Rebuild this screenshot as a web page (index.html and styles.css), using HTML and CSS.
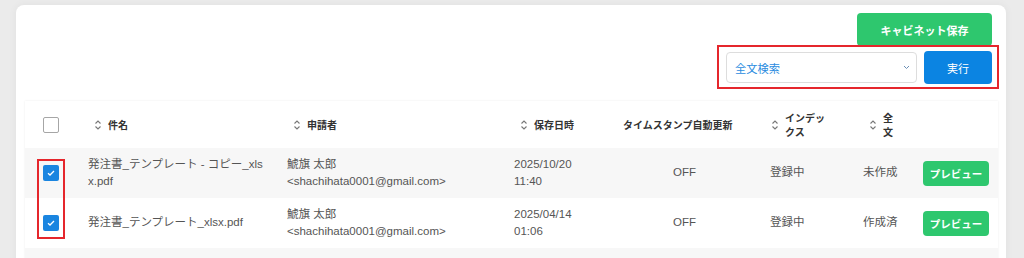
FILE: index.html
```html
<!DOCTYPE html>
<html lang="ja">
<head>
  <meta charset="UTF-8" />
  <meta name="viewport" content="width=device-width, initial-scale=1.0" />
  <title>キャビネット</title>
  <link rel="stylesheet" href="styles.css">
</head>
<body>
  <div class="card">
    <div class="toolbar">
      <button class="btn-save">キャビネット保存</button>
      <div class="search-row mark">
        <div class="select">
          <span>全文検索</span>
          <svg width="7" height="5" viewBox="0 0 7 5"><path d="M1 1 L3.5 3.5 L6 1" fill="none" stroke="#6b8fb5" stroke-width="1"/></svg>
        </div>
        <button class="btn-run">実行</button>
      </div>
    </div>

    <div class="table-wrap">
      <table class="files">
        <colgroup>
          <col style="width: 55px">
          <col style="width: 199px">
          <col style="width: 227px">
          <col style="width: 109px">
          <col style="width: 147px">
          <col style="width: 93px">
          <col style="width: 60px">
          <col style="width: 83px">
        </colgroup>
        <thead>
          <tr>
            <th class="cb-cell"><span class="checkbox"></span></th>
            <th><span class="sort"><svg class="sort-icon" width="8" height="12" viewBox="0 0 8 12"><path d="M1.5 4.5 L4 2 L6.5 4.5 M1.5 7.5 L4 10 L6.5 7.5" fill="none" stroke="#777" stroke-width="1.1"/></svg><span>件名</span></span></th>
            <th><span class="sort"><svg class="sort-icon" width="8" height="12" viewBox="0 0 8 12"><path d="M1.5 4.5 L4 2 L6.5 4.5 M1.5 7.5 L4 10 L6.5 7.5" fill="none" stroke="#777" stroke-width="1.1"/></svg><span>申請者</span></span></th>
            <th><span class="sort"><svg class="sort-icon" width="8" height="12" viewBox="0 0 8 12"><path d="M1.5 4.5 L4 2 L6.5 4.5 M1.5 7.5 L4 10 L6.5 7.5" fill="none" stroke="#777" stroke-width="1.1"/></svg><span>保存日時</span></span></th>
            <th class="plain">タイムスタンプ自動更新</th>
            <th class="tight"><span class="sort"><svg class="sort-icon" width="8" height="12" viewBox="0 0 8 12"><path d="M1.5 4.5 L4 2 L6.5 4.5 M1.5 7.5 L4 10 L6.5 7.5" fill="none" stroke="#777" stroke-width="1.1"/></svg><span class="label-index">インデックス</span></span></th>
            <th><span class="sort"><svg class="sort-icon" width="8" height="12" viewBox="0 0 8 12"><path d="M1.5 4.5 L4 2 L6.5 4.5 M1.5 7.5 L4 10 L6.5 7.5" fill="none" stroke="#777" stroke-width="1.1"/></svg><span class="label-full">全文</span></span></th>
            <th></th>
          </tr>
        </thead>
        <tbody>
          <tr>
            <td class="cb-cell"><span class="checkbox checked"><svg width="16" height="16" viewBox="0 0 16 16"><path d="M5 8.2 L7 10 L11 6" fill="none" stroke="#fff" stroke-width="1.3"/></svg></span></td>
            <td>発注書_テンプレート - コピー_xlsx.pdf</td>
            <td>鯱旗 太郎<br>&lt;shachihata0001@gmail.com&gt;</td>
            <td>2025/10/20<br>11:40</td>
            <td class="center">OFF</td>
            <td>登録中</td>
            <td>未作成</td>
            <td class="action"><button class="btn-preview">プレビュー</button></td>
          </tr>
          <tr>
            <td class="cb-cell"><span class="checkbox checked"><svg width="16" height="16" viewBox="0 0 16 16"><path d="M5 8.2 L7 10 L11 6" fill="none" stroke="#fff" stroke-width="1.3"/></svg></span></td>
            <td>発注書_テンプレート_xlsx.pdf</td>
            <td>鯱旗 太郎<br>&lt;shachihata0001@gmail.com&gt;</td>
            <td>2025/04/14<br>01:06</td>
            <td class="center">OFF</td>
            <td>登録中</td>
            <td>作成済</td>
            <td class="action"><button class="btn-preview">プレビュー</button></td>
          </tr>
          <tr class="filler">
            <td colspan="8"></td>
          </tr>
        </tbody>
      </table>
      <div class="mark mark-rows"></div>
    </div>
  </div>
</body>
</html>
```

FILE: styles.css
```css
body {
  margin: 0;
  padding: 5px 18px 0 16px;
  background-color: #ebebeb;
  font-family: "Liberation Sans", "Noto Sans CJK JP", sans-serif;
  color: #555;
  overflow: hidden;
  height: 253px;
}
.card {
  background: #fff;
  border-radius: 8px;
  box-shadow: 0 0 8px rgba(0, 0, 0, 0.05);
  padding: 8px 7px 20px 9px;
}
.toolbar {
  display: flex;
  flex-direction: column;
  align-items: flex-end;
}
.btn-save {
  width: 135px;
  height: 33px;
  margin-right: 7px;
  border: none;
  border-radius: 4px;
  background: #2ec76e;
  color: #fff;
  font-family: "Noto Sans CJK JP", sans-serif;
  font-size: 11px;
  font-weight: bold;
  cursor: pointer;
}
.search-row {
  display: flex;
  align-items: center;
  gap: 7px;
  margin-top: -1px;
  padding: 4px 5px 3px 7px;
}
.mark {
  border: 2px solid #e5262c;
}
.select {
  width: 191px;
  height: 31px;
  box-sizing: border-box;
  border: 1px solid #ddd;
  border-radius: 4px;
  display: flex;
  align-items: center;
  justify-content: space-between;
  padding: 0 6px 0 8px;
  color: #2b8ce0;
  font-family: "Noto Sans CJK JP", sans-serif;
  font-size: 11.25px;
}
.btn-run {
  width: 68px;
  height: 33px;
  border: none;
  border-radius: 4px;
  background: #0b84e2;
  color: #fff;
  font-family: "Noto Sans CJK JP", sans-serif;
  font-size: 11px;
  cursor: pointer;
}
.table-wrap {
  position: relative;
  margin-top: 12px;
  margin-right: 1px;
}
.files {
  width: 973px;
  border-collapse: collapse;
  table-layout: fixed;
  box-shadow: 0 0 2px rgba(0, 0, 0, 0.08);
}
.files th {
  height: 47px;
  padding: 0 8px 0 14px;
  text-align: left;
  font-family: "Noto Sans CJK JP", sans-serif;
  font-size: 10px;
  font-weight: bold;
  color: #333;
  line-height: 14px;
}
.files th.plain {
  padding-left: 8px;
}
.files th.tight {
  padding-left: 9px;
}
.files td {
  height: 50px;
  padding: 0 8px;
  font-size: 11.5px;
  line-height: 17.5px;
  vertical-align: middle;
  word-break: break-all;
}
.files tbody tr:nth-child(odd) {
  background: #f7f7f7;
}
.files tr.filler td {
  height: 20px;
}
.files td.center {
  text-align: center;
  padding-right: 16px;
}
.files .cb-cell {
  padding: 0 0 0 18px;
}
.sort {
  display: flex;
  align-items: center;
  gap: 6px;
}
.sort-icon {
  flex: none;
}
.label-index {
  width: 48px;
}
.label-full {
  width: 12px;
}
.checkbox {
  display: block;
  width: 16px;
  height: 16px;
  box-sizing: border-box;
  border: 1.5px solid #a6a6a6;
  border-radius: 2px;
  background: #fff;
}
.checkbox.checked {
  border: none;
  background: #1a85e0;
}
.checkbox svg {
  display: block;
}
.action {
  text-align: center;
}
.files td.action {
  padding: 0 9px 0 8px;
}
.btn-preview {
  width: 66px;
  height: 25px;
  border: none;
  border-radius: 4px;
  background: #2ec76e;
  color: #fff;
  font-family: "Noto Sans CJK JP", sans-serif;
  font-size: 10.5px;
  font-weight: bold;
  padding: 0;
  cursor: pointer;
}
.mark-rows {
  position: absolute;
  left: 12px;
  top: 58px;
  width: 24px;
  height: 76px;
}
```
